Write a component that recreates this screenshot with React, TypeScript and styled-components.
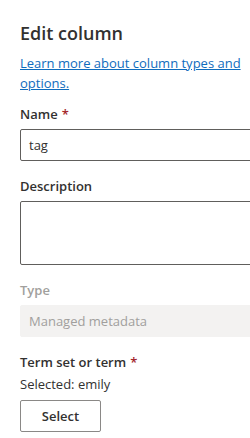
import styled, { createGlobalStyle } from 'styled-components';

const GlobalStyle = createGlobalStyle`
  html, body {
    margin: 0;
    padding: 0;
    background: #ffffff;
    overflow: hidden;
  }
  body {
    font-family: 'Open Sans', 'Noto Sans', sans-serif;
  }
`;

const Panel = styled.div`
  width: 262px;
  padding: 19px 0 0 20px;
  color: #323130;
`;

const Title = styled.h2`
  margin: 0;
  font-size: 18px;
  line-height: 28px;
  font-weight: 600;
  color: #323130;
`;

const HelpLink = styled.a`
  display: block;
  width: 240px;
  margin-top: 6px;
  font-size: 13px;
  line-height: 20px;
  color: #0f6cbd;
  text-decoration: underline;
`;

const Field = styled.div`
  margin-top: 10px;
  &:first-of-type {
    margin-top: 6px;
  }
`;

const Label = styled.label<{ $disabled?: boolean; $tight?: boolean }>`
  display: block;
  padding: 5px 0 ${(p) => (p.$tight ? '2px' : '5px')};
  font-size: 13px;
  line-height: 20px;
  font-weight: 600;
  color: ${(p) => (p.$disabled ? '#a19f9d' : '#323130')};
`;

const Required = styled.span`
  color: #a4262c;
  margin-left: 4px;
`;

const Input = styled.div<{ $multiline?: boolean; $disabled?: boolean }>`
  box-sizing: border-box;
  height: ${(p) => (p.$multiline ? '64px' : '32px')};
  border: 1px solid ${(p) => (p.$disabled ? '#f3f2f1' : '#605e5c')};
  border-radius: 2px;
  background: ${(p) => (p.$disabled ? '#f3f2f1' : '#ffffff')};
  padding: 0 8px;
  font-size: 13px;
  line-height: 30px;
  color: ${(p) => (p.$disabled ? '#a19f9d' : '#323130')};
`;

const Selected = styled.div`
  font-size: 13px;
  line-height: 20px;
  color: #323130;
`;

const Button = styled.button`
  box-sizing: border-box;
  margin-top: 6px;
  height: 32px;
  width: 81px;
  padding: 0;
  border: 1px solid #8a8886;
  border-radius: 2px;
  background: #ffffff;
  font-family: inherit;
  font-size: 13px;
  font-weight: 600;
  color: #323130;
`;

export default function App() {
  return (
    <>
      <GlobalStyle />
      <Panel>
        <Title>Edit column</Title>
        <HelpLink href="#">Learn more about column types and options.</HelpLink>
        <Field>
          <Label>
            Name<Required>*</Required>
          </Label>
          <Input>tag</Input>
        </Field>
        <Field>
          <Label>Description</Label>
          <Input $multiline />
        </Field>
        <Field>
          <Label $disabled>Type</Label>
          <Input $disabled>Managed metadata</Input>
        </Field>
        <Field>
          <Label $tight>
            Term set or term<Required>*</Required>
          </Label>
          <Selected>Selected: emily</Selected>
          <Button>Select</Button>
        </Field>
      </Panel>
    </>
  );
}
